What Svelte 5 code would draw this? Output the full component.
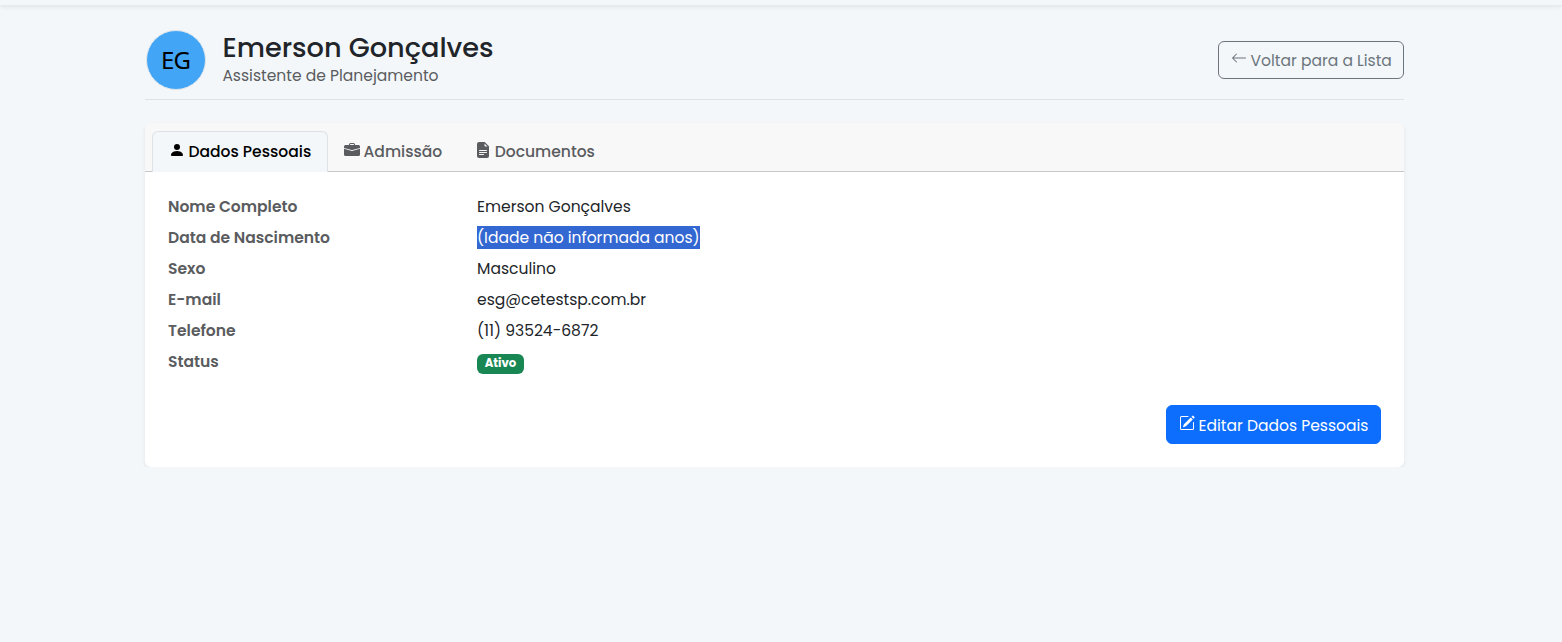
<script>
  const icons = {
    person: ['M3 14s-1 0-1-1 1-4 6-4 6 3 6 4-1 1-1 1H3Zm5-6a3 3 0 1 0 0-6 3 3 0 0 0 0 6Z'],
    briefcase: [
      'M6.5 1A1.5 1.5 0 0 0 5 2.5V3H1.5A1.5 1.5 0 0 0 0 4.5v1.384l7.614 2.03a1.5 1.5 0 0 0 .772 0L16 5.884V4.5A1.5 1.5 0 0 0 14.5 3H11v-.5A1.5 1.5 0 0 0 9.5 1h-3zm0 1h3a.5.5 0 0 1 .5.5V3H6v-.5a.5.5 0 0 1 .5-.5z',
      'M0 12.5A1.5 1.5 0 0 0 1.5 14h13a1.5 1.5 0 0 0 1.5-1.5V6.85L8.129 8.947a.5.5 0 0 1-.258 0L0 6.85v5.65z'
    ],
    file: ['M9.293 0H4a2 2 0 0 0-2 2v12a2 2 0 0 0 2 2h8a2 2 0 0 0 2-2V4.707A1 1 0 0 0 13.707 4L10 .293A1 1 0 0 0 9.293 0zM9.5 3.5v-2l3 3h-2a1 1 0 0 1-1-1zM4.5 9a.5.5 0 0 1 0-1h7a.5.5 0 0 1 0 1h-7zM4 10.5a.5.5 0 0 1 .5-.5h7a.5.5 0 0 1 0 1h-7a.5.5 0 0 1-.5-.5zm.5 2.5a.5.5 0 0 1 0-1h4a.5.5 0 0 1 0 1h-4z'],
    arrow: ['M15 8a.5.5 0 0 0-.5-.5H2.707l3.147-3.146a.5.5 0 1 0-.708-.708l-4 4a.5.5 0 0 0 0 .708l4 4a.5.5 0 0 0 .708-.708L2.707 8.5H14.5A.5.5 0 0 0 15 8z'],
    pencil: [
      'M15.502 1.94a.5.5 0 0 1 0 .706L14.459 3.69l-2-2L13.502.646a.5.5 0 0 1 .707 0l1.293 1.293zm-1.75 2.456-2-2L4.939 9.21a.5.5 0 0 0-.121.196l-.805 2.414a.25.25 0 0 0 .316.316l2.414-.805a.5.5 0 0 0 .196-.12l6.813-6.814z',
      'M1 13.5A1.5 1.5 0 0 0 2.5 15h11a1.5 1.5 0 0 0 1.5-1.5v-6a.5.5 0 0 0-1 0v6a.5.5 0 0 1-.5.5h-11a.5.5 0 0 1-.5-.5v-11a.5.5 0 0 1 .5-.5H9a.5.5 0 0 0 0-1H2.5A1.5 1.5 0 0 0 1 2.5v11z'
    ]
  };

  const tabs = [
    { label: 'Dados Pessoais', icon: 'person', active: true },
    { label: 'Admissão', icon: 'briefcase' },
    { label: 'Documentos', icon: 'file' }
  ];

  const fields = [
    { label: 'Nome Completo', value: 'Emerson Gonçalves' },
    { label: 'Data de Nascimento', value: '(Idade não informada anos)', selected: true },
    { label: 'Sexo', value: 'Masculino' },
    { label: 'E-mail', value: 'esg@cetestsp.com.br' },
    { label: 'Telefone', value: '(11) 93524-6872' },
    { label: 'Status', value: 'Ativo', badge: true }
  ];
</script>

{#snippet icon(name)}
  <svg class="icon" viewBox="0 0 16 16" width="16" height="16" fill="currentColor" aria-hidden="true">
    {#each icons[name] as d}
      <path fill-rule="evenodd" {d} />
    {/each}
  </svg>
{/snippet}

<div class="topbar"></div>
<main>
  <header>
    <div class="avatar">EG</div>
    <div class="identity">
      <h1>Emerson Gonçalves</h1>
      <p>Assistente de Planejamento</p>
    </div>
    <button class="btn back">{@render icon('arrow')}<span>Voltar para a Lista</span></button>
  </header>

  <section class="card">
    <nav>
      {#each tabs as tab}
        <button class="tab" class:active={tab.active}>
          {@render icon(tab.icon)}<span>{tab.label}</span>
        </button>
      {/each}
    </nav>
    <div class="body">
      <dl>
        {#each fields as f}
          <div class="row">
            <dt>{f.label}</dt>
            <dd>
              <span class:selected={f.selected} class:badge={f.badge}>{f.value}</span>
            </dd>
          </div>
        {/each}
      </dl>
      <div class="actions">
        <button class="btn edit">{@render icon('pencil')}<span>Editar Dados Pessoais</span></button>
      </div>
    </div>
  </section>
</main>

<style>
  :global(body) {
    background: #f3f7fa;
  }
  .topbar {
    height: 5px;
    background: #f3f7fa;
    box-shadow: 0 2px 4px rgba(0, 0, 0, 0.08);
  }
  main, button {
    font-family: Poppins, Inter, sans-serif;
    font-size: 15.56px;
    line-height: 24px;
  }
  main {
    width: 1259px;
    margin-left: 145px;
    padding-top: 25px;
    color: #212529;
  }
  header {
    display: flex;
    align-items: center;
    box-sizing: border-box;
    height: 70px;
    padding-bottom: 9px;
    border-bottom: 1px solid #dee2e6;
  }
  .avatar {
    box-sizing: border-box;
    width: 60px;
    height: 60px;
    margin: 0 16.4px 0 1px;
    padding-right: 1px;
    border: 1px solid #dfe5ea;
    border-radius: 50%;
    background: #42a5f5;
    color: #000;
    font: 24px/57px "Noto Sans", sans-serif;
    letter-spacing: -0.8px;
    text-align: center;
  }
  h1 {
    margin: 0;
    font-size: 27.2px;
    line-height: 30px;
    font-weight: 500;
  }
  p {
    margin: 1px 0 0;
    color: #5a5c60;
  }
  button {
    cursor: pointer;
  }
  .icon {
    flex: none;
    margin-top: -4px;
  }
  .btn {
    display: flex;
    align-items: center;
    gap: 3.5px;
    box-sizing: border-box;
    height: 38px;
    padding: 1px 12px 0;
    border: 1px solid #6c757d;
    border-radius: 6px;
    white-space: nowrap;
  }
  .back {
    width: 186px;
    margin-left: auto;
    background: transparent;
    color: #6c757d;
  }
  .back .icon {
    margin-top: -5px;
  }
  .edit {
    width: 215px;
    height: 39px;
    padding-top: 2px;
    border-color: #0d6efd;
    background: #0d6efd;
    color: #fff;
  }
  .edit .icon {
    margin-top: -5px;
  }
  .card {
    margin-top: 23px;
    border-radius: 6px;
    background: #fff;
    box-shadow: 0 2px 4px rgba(0, 0, 0, 0.075);
  }
  nav {
    display: flex;
    box-sizing: border-box;
    height: 49px;
    padding: 8px 7px 0;
    border-bottom: 1px solid #c6c7c8;
    border-radius: 6px 6px 0 0;
    background: #f8f8f8;
  }
  .tab {
    display: flex;
    align-items: center;
    gap: 3.5px;
    box-sizing: border-box;
    height: 41px;
    padding: 0 15px 0 16px;
    border: 1px solid transparent;
    border-bottom: 0;
    border-radius: 6px 6px 0 0;
    background: transparent;
    color: #5a5c60;
    font-weight: 500;
    white-space: nowrap;
  }
  .tab.active {
    width: 176px;
    margin-right: -1px;
    border-color: #dee2e6;
    background: #f3f7fa;
    color: #000;
  }
  .body {
    padding: 19px 23px 23px;
  }
  dl {
    margin: 0;
  }
  .row {
    display: grid;
    grid-template-columns: 309px 1fr;
    height: 31px;
    line-height: 31px;
  }
  dt {
    color: #5a5c60;
    font-weight: 600;
  }
  dd {
    display: flex;
    align-items: center;
    margin: 0;
  }
  .selected {
    height: 23px;
    line-height: 23px;
    background: #3367d1;
    color: #fff;
  }
  .badge {
    box-sizing: border-box;
    width: 47px;
    height: 20px;
    margin-top: 5px;
    border-radius: 6px;
    background: #198754;
    color: #fff;
    font-size: 11.7px;
    line-height: 18px;
    font-weight: 700;
    text-align: center;
  }
  .actions {
    display: flex;
    justify-content: flex-end;
    margin-top: 28px;
  }
</style>
